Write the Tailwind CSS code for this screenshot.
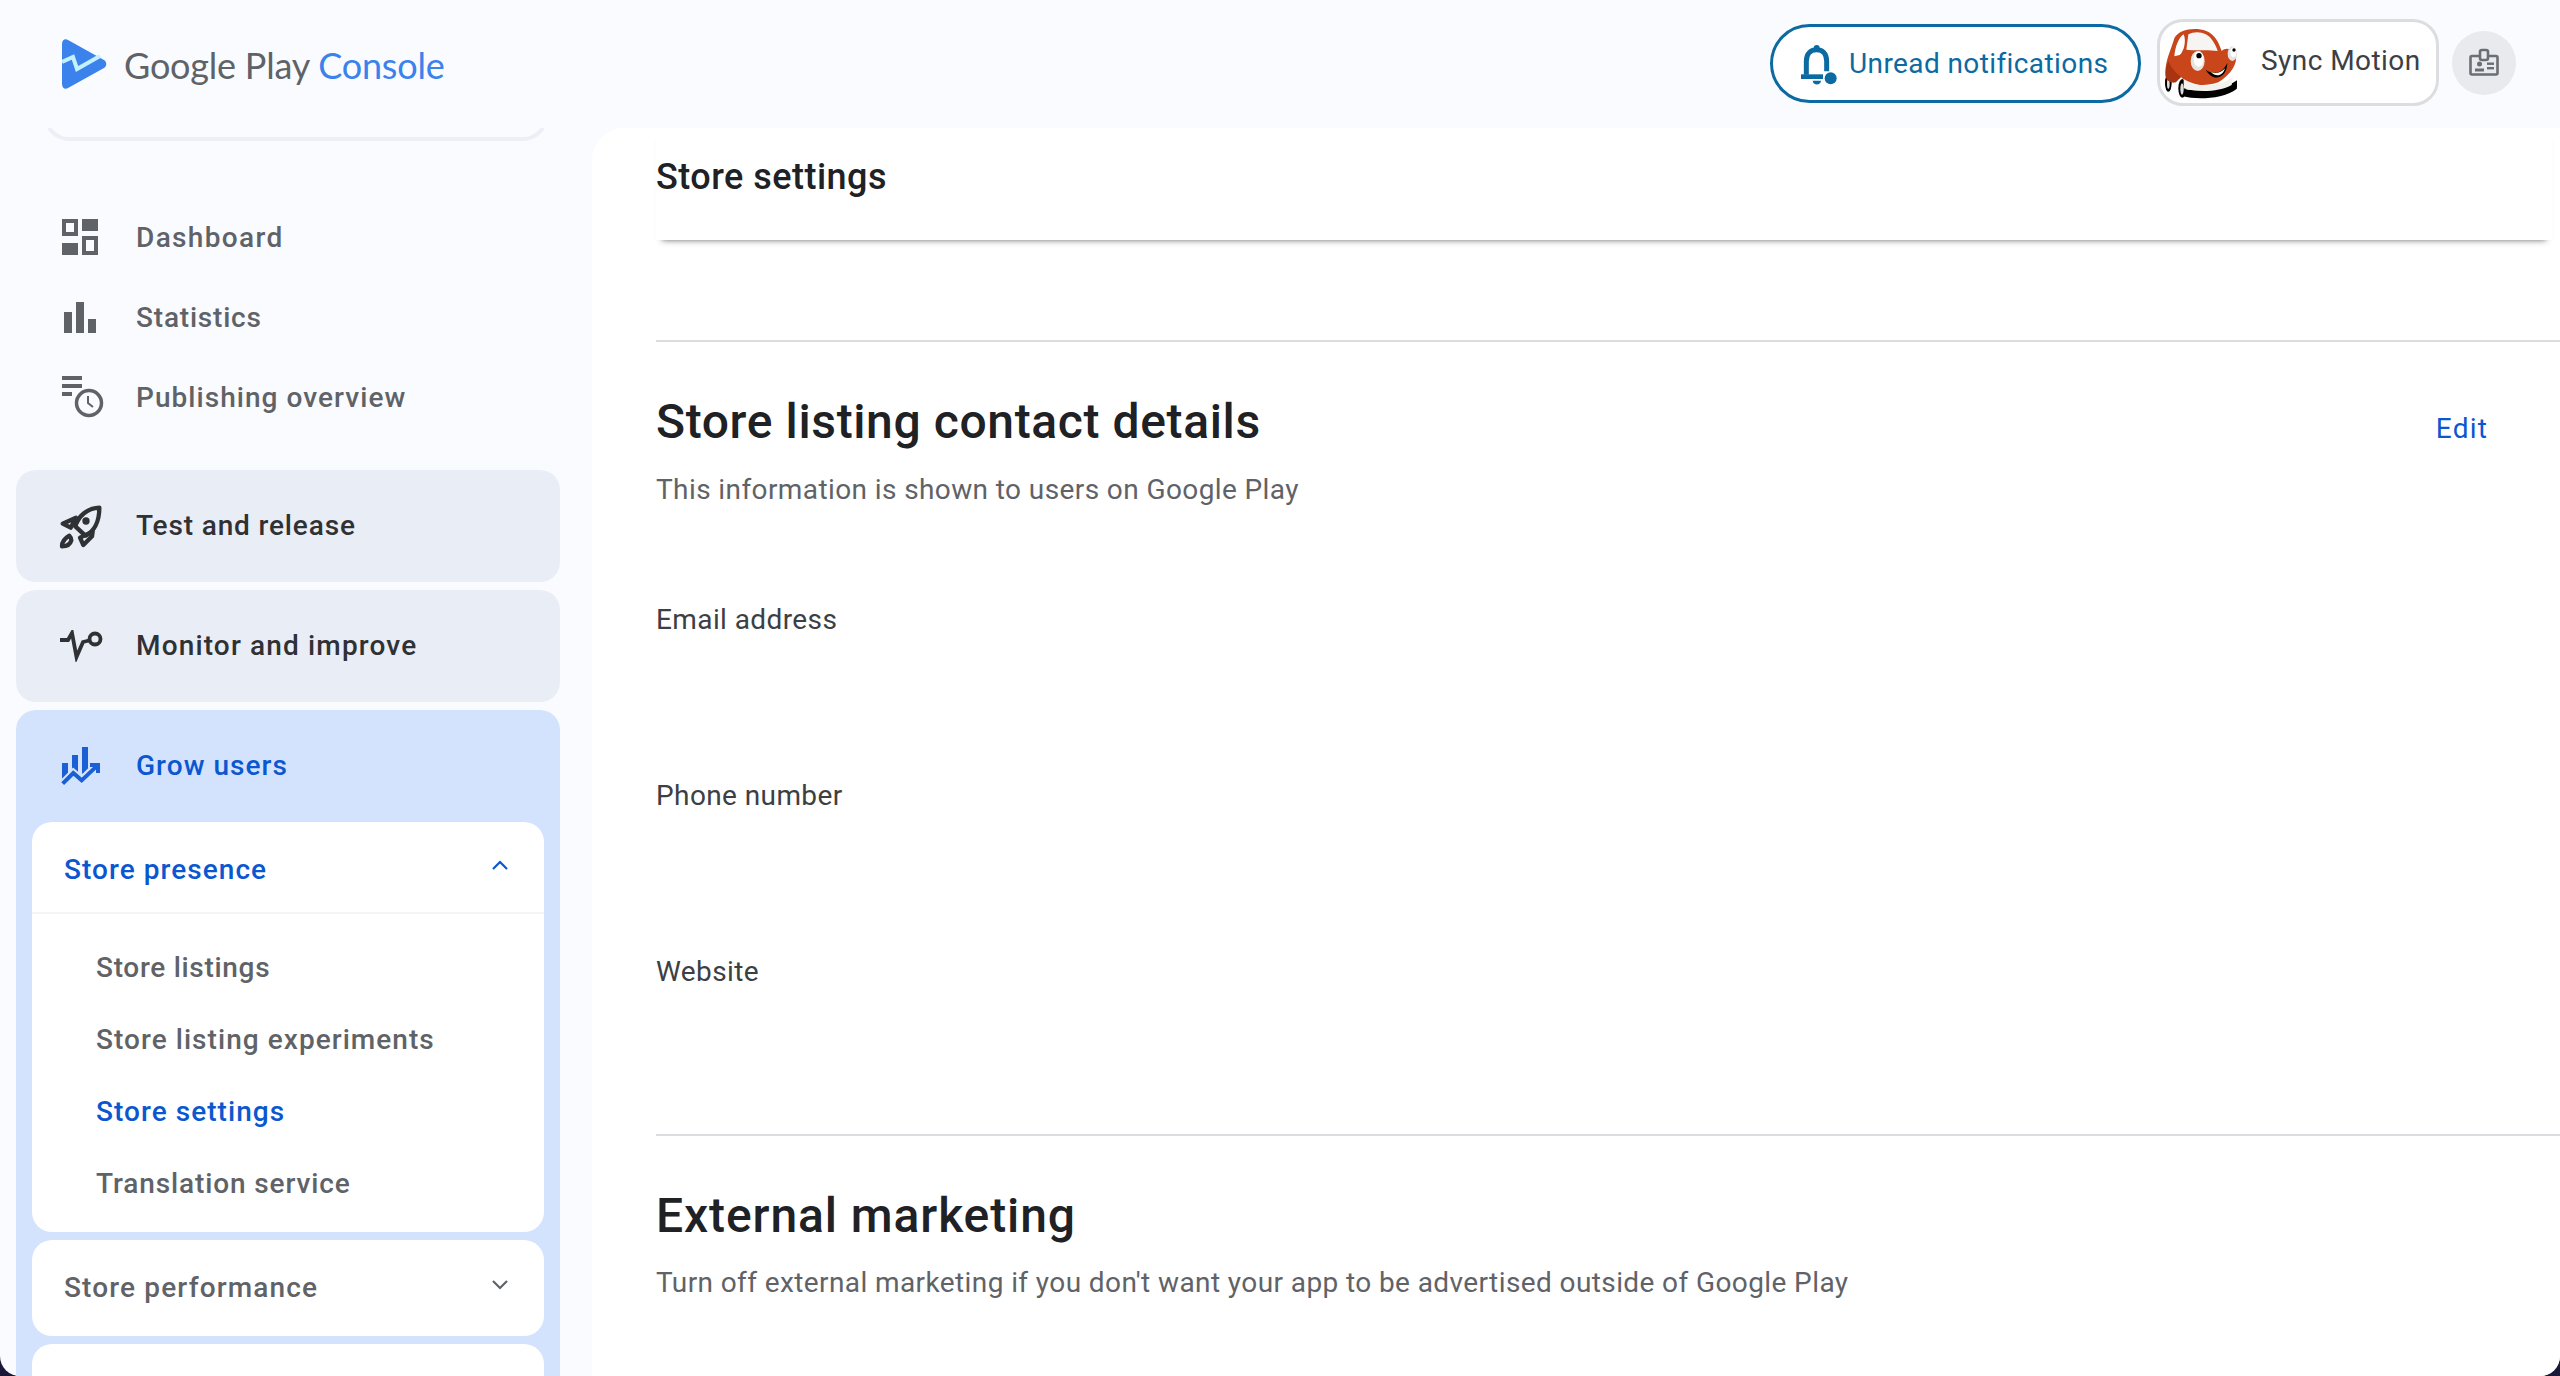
<!doctype html>
<html>
<head>
<meta charset="utf-8">
<script src="https://cdn.jsdelivr.net/npm/@tailwindcss/browser@4"></script>
</head>
<body class="bg-[#1a1838] overflow-hidden">
<div class="w-[2560px] h-[1376px] rounded-b-[20px] overflow-hidden bg-[#f9fbff] flex flex-col font-['Roboto',sans-serif]">
  <header class="h-[128px] shrink-0 flex items-start">
    <div class="flex items-center pl-[62px] pt-[38px]">
      <svg width="45" height="50" viewBox="0 0 45 50" class="shrink-0">
        <path d="M0 5C0 1 3 -1 6 1L42 21C45 23 45 27 42 29L6 49C3 51 0 49 0 45Z" fill="#3b82ec"/>
        <path d="M0 23L11 18L15 30L38 17" fill="none" stroke="#c2f2ff" stroke-width="4"/>
      </svg>
      <span class="ml-[17px] mt-[2px] text-[36px] leading-[50px] tracking-[-0.2px] text-[#5f6368] font-['Lato',sans-serif] whitespace-nowrap">Google Play <span class="text-[#3b82ec]">Console</span></span>
    </div>
    <div class="ml-auto flex items-start mr-[44px]">
      <div class="mt-[24px] w-[371px] h-[79px] rounded-[40px] border-[3px] border-[#0b6aa2] bg-white flex items-center pl-[26px]">
        <svg width="40" height="44" viewBox="60 35 120 130" class="shrink-0">
          <path d="M82 132V92C82 66 98 57 113 57C128 57 143 66 143 92V122" fill="none" stroke="#0b6aa2" stroke-width="15"/>
          <circle cx="113" cy="52" r="9" fill="#0b6aa2"/>
          <rect x="66" y="131" width="66" height="14" fill="#0b6aa2"/>
          <path d="M101 150H126C125 165 102 165 101 150Z" fill="#0b6aa2"/>
          <circle cx="155" cy="143" r="18" fill="#0b6aa2"/>
        </svg>
        <span class="ml-[10px] text-[28px] leading-[36px] tracking-[0.4px] text-[#0b6aa2] whitespace-nowrap">Unread notifications</span>
      </div>
      <div class="ml-[16px] mt-[19px] w-[282px] h-[87px] rounded-[26px] border-[3px] border-[#dcdde1] bg-white flex items-center pl-[5px]">
        <svg width="72" height="72" viewBox="18 20 216 216" class="shrink-0 rounded-[12px]">
          <rect x="18" y="20" width="216" height="216" fill="#fff"/>
          <path d="M72 205C120 215 190 210 234 180V205C190 238 110 238 72 228Z" fill="#000"/>
          <ellipse cx="28" cy="188" rx="10" ry="26" fill="#000"/>
          <ellipse cx="70" cy="204" rx="12" ry="28" fill="#000"/>
          <ellipse cx="28" cy="190" rx="4" ry="15" fill="#ddd"/>
          <ellipse cx="69" cy="206" rx="5" ry="17" fill="#ddd"/>
          <path d="M20 168C16 128 32 100 46 54C60 26 108 20 142 32C168 42 180 68 188 92C200 80 220 84 230 104C238 134 206 170 178 186C132 202 86 194 66 170L50 186C34 188 24 182 20 168Z" fill="#c9451a"/>
          <path d="M20 168C18 150 22 135 28 122C40 150 55 160 66 170L50 186C34 188 24 182 20 168Z" fill="#a83412"/>
          <path d="M74 176C118 204 182 200 222 170L218 194C182 214 120 218 74 204Z" fill="#f4f2ee"/>
          <path d="M46 108C48 82 58 52 74 42C82 60 76 92 62 104Z" fill="#fff"/>
          <path d="M82 88L88 42C112 30 146 36 160 60C168 72 174 84 176 92C146 87 112 92 82 88Z" fill="#f6f5f3"/>
          <ellipse cx="116" cy="122" rx="21" ry="30" fill="#e6e4e0"/>
          <ellipse cx="119" cy="116" rx="15" ry="23" fill="#fff"/>
          <circle cx="120" cy="106" r="8" fill="#000"/>
          <ellipse cx="220" cy="100" rx="14" ry="22" fill="#e6e4e0"/>
          <ellipse cx="223" cy="96" rx="9" ry="15" fill="#fff"/>
          <circle cx="225" cy="89" r="5" fill="#000"/>
          <path d="M140 148C165 165 190 160 205 128C204 172 165 190 140 148Z" fill="#000"/>
          <path d="M156 156C172 162 188 156 198 144C192 166 172 172 156 156Z" fill="#fff"/>
        </svg>
        <span class="ml-[24px] text-[28px] leading-[36px] tracking-[0.45px] text-[#3c4043] whitespace-nowrap -mt-[3px]">Sync Motion</span>
      </div>
      <div class="ml-[13px] mt-[31px] w-[64px] h-[64px] rounded-full bg-[#e8eaed] flex items-center justify-center">
        <svg width="30" height="30" viewBox="0 0 30 30">
          <path d="M11 8H3C2 8 1.500 8.500 1.500 9.500V25C1.500 26 2 26.500 3 26.500H27C28 26.500 28.500 26 28.500 25V9.500C28.500 8.500 28 8 27 8H19" fill="none" stroke="#6a6f73" stroke-width="2.600"/>
          <rect x="11" y="2" width="8" height="10" rx="2" fill="none" stroke="#6a6f73" stroke-width="2.600"/>
          <circle cx="10.500" cy="16" r="2.500" fill="#6a6f73"/>
          <rect x="6" y="20.500" width="9" height="3" fill="#6a6f73"/>
          <rect x="18" y="14.500" width="7" height="2.400" fill="#6a6f73"/>
          <rect x="18" y="19" width="7" height="2.400" fill="#6a6f73"/>
        </svg>
      </div>
    </div>
  </header>

  <div class="flex-1 flex min-h-0">
    <aside class="w-[592px] shrink-0 overflow-hidden">
      <div class="mx-[44px] h-[21px] border-b-[4px] border-x-[4px] border-[#eceff6] rounded-b-[28px] -mt-[12px] box-content"></div>
      <nav class="mt-[56px] text-[28px] font-medium tracking-[1.05px]">
        <div class="h-[80px] flex items-center pl-[62px] text-[#5f6368]">
          <svg width="36" height="36" viewBox="0 0 36 36" class="shrink-0 mr-[38px]" fill="#5f6368">
            <path fill-rule="evenodd" d="M0 0H16V17H0ZM4 4V13H12V4Z"/>
            <rect x="20" y="0" width="16" height="12"/>
            <rect x="0" y="24" width="16" height="12"/>
            <path fill-rule="evenodd" d="M20 17H36V36H20ZM24 21V32H32V21Z"/>
          </svg>
          <span class="tracking-[1.35px] pt-[1px]">Dashboard</span>
        </div>
        <div class="h-[80px] flex items-center pl-[62px] text-[#5f6368]">
          <svg width="36" height="36" viewBox="0 0 36 36" class="shrink-0 mr-[38px]" fill="#5f6368">
            <rect x="2" y="13" width="8" height="21"/>
            <rect x="14" y="3" width="8" height="31"/>
            <rect x="26" y="20" width="8" height="14"/>
          </svg>
          <span class="tracking-[0.8px] pt-[1px]">Statistics</span>
        </div>
        <div class="h-[80px] flex items-center pl-[62px] text-[#5f6368]">
          <svg width="42" height="42" viewBox="0 0 42 42" class="shrink-0 mr-[32px]" fill="#5f6368">
            <rect x="0" y="0" width="20" height="4"/>
            <rect x="0" y="8" width="20" height="4"/>
            <rect x="0" y="16" width="10" height="4"/>
            <circle cx="27" cy="27" r="12.500" fill="none" stroke="#5f6368" stroke-width="3.500"/>
            <path d="M26 20V27L31 31" fill="none" stroke="#5f6368" stroke-width="2"/>
          </svg>
          <span class="pt-[1px]">Publishing overview</span>
        </div>
      </nav>
      <div class="mt-[33px] pl-[16px] pr-[32px] flex flex-col gap-[8px] text-[28px] font-medium tracking-[1.05px]">
        <div class="h-[112px] rounded-[20px] bg-[#e9edf6] flex items-center pl-[34px] text-[#303134]">
          <svg width="70" height="70" viewBox="0 0 210 210" class="shrink-0 mr-[16px]" fill="none" stroke="#303134" stroke-width="13" stroke-linejoin="round">
            <path d="M148 50C110 52 85 76 76 106L106 134C132 122 148 92 148 50Z"/>
            <path d="M78 80L38 98L62 110Z"/>
            <path d="M128 122L126 136L100 162L90 140Z"/>
            <path d="M58 134C44 142 36 152 36 166C48 166 60 162 64 148C64 142 62 138 58 134Z"/>
            <circle cx="108" cy="90" r="11" fill="#303134" stroke="none"/>
          </svg>
          <span class="tracking-[0.85px]">Test and release</span>
        </div>
        <div class="h-[112px] rounded-[20px] bg-[#e9edf6] flex items-center pl-[44px] text-[#303134]">
          <svg width="44" height="32" viewBox="0 0 44 32" class="shrink-0 mr-[32px]" fill="none" stroke="#303134" stroke-width="3.800">
            <path d="M0 10H8L12 3L16.500 27L23 12L31 10"/>
            <circle cx="35" cy="9" r="5.500"/>
          </svg>
          <span class="tracking-[1.15px]">Monitor and improve</span>
        </div>
        <div class="rounded-t-[20px] bg-[#d3e3fd] h-[700px] px-[16px]">
          <div class="h-[112px] flex items-center pl-[18px] text-[#0b57d0]">
            <svg width="70" height="70" viewBox="0 0 210 210" class="shrink-0 mr-[16px]">
              <rect x="36" y="96" width="18" height="60" fill="#1a5fd6"/>
              <rect x="66" y="72" width="18" height="70" fill="#1a5fd6"/>
              <rect x="96" y="48" width="18" height="80" fill="#1a5fd6"/>
              <path d="M38 158L70 126L95 148L135 108" fill="none" stroke="#d3e3fd" stroke-width="24"/>
              <path d="M38 158L70 126L95 148L146 100" fill="none" stroke="#1a5fd6" stroke-width="12"/>
              <path d="M120 96H150V126H138V108H120Z" fill="#1a5fd6"/>
            </svg>
            <span>Grow users</span>
          </div>
          <div class="rounded-[20px] bg-white h-[410px]">
            <div class="h-[92px] pt-[6px] border-b-[2px] border-[#f3f4f6] flex items-center pl-[32px] pr-[36px] text-[#0b57d0] justify-between">
              <span>Store presence</span>
              <svg width="16" height="10" viewBox="0 0 16 10" class="-mt-[10px]" fill="none" stroke="#0b57d0" stroke-width="2.200"><path d="M1 9L8 2L15 9"/></svg>
            </div>
            <div class="pt-[18px] pl-[64px] text-[#5f6368]">
              <div class="h-[72px] flex items-center tracking-[0.7px]">Store listings</div>
              <div class="h-[72px] flex items-center">Store listing experiments</div>
              <div class="h-[72px] flex items-center text-[#0b57d0]">Store settings</div>
              <div class="h-[72px] flex items-center tracking-[0.88px]">Translation service</div>
            </div>
          </div>
          <div class="mt-[8px] rounded-[20px] bg-white h-[96px] flex items-center pl-[32px] pr-[36px] justify-between text-[#5f6368]">
            <span class="tracking-[1.15px]">Store performance</span>
            <svg width="16" height="10" viewBox="0 0 16 10" class="-mt-[6px]" fill="none" stroke="#5f6368" stroke-width="2.200"><path d="M1 1L8 8L15 1"/></svg>
          </div>
          <div class="mt-[8px] rounded-[20px] bg-white h-[96px]"></div>
        </div>
      </div>
    </aside>

    <main class="flex-1 bg-white rounded-tl-[32px] pl-[64px] overflow-hidden">
      <div class="h-[112px] mr-[8px] flex items-center pb-[14px] text-[36px] font-medium tracking-[0.47px] text-[#202124] shadow-[0_6px_6px_-6px_rgba(60,64,67,0.8)]">Store settings</div>
      <div class="mt-[100px] h-[2px] bg-[#dadce0]"></div>
      <section class="mt-[48px] relative pr-[72px]">
        <div class="flex items-start justify-between">
          <h1 class="h-[64px] leading-[64px] text-[48px] font-medium tracking-[0.62px] text-[#202124]">Store listing contact details</h1>
          <a class="mt-[19px] leading-[40px] text-[28px] tracking-[1.2px] text-[#0b57d0]">Edit</a>
        </div>
        <p class="mt-[16px] h-[40px] leading-[40px] text-[28px] tracking-[0.4px] text-[#5f6368]">This information is shown to users on Google Play</p>
        <div class="mt-[90px] h-[176px] text-[28px] leading-[40px] tracking-[0.4px] text-[#3c4043]">Email address</div>
        <div class="h-[176px] text-[28px] leading-[40px] tracking-[0.4px] text-[#3c4043]">Phone number</div>
        <div class="h-[182px] text-[28px] leading-[40px] tracking-[0.4px] text-[#3c4043]">Website</div>
      </section>
      <div class="h-[2px] bg-[#dadce0]"></div>
      <section class="mt-[48px]">
        <h2 class="h-[64px] leading-[64px] text-[48px] font-medium tracking-[0.9px] text-[#202124]">External marketing</h2>
        <p class="mt-[15px] h-[40px] leading-[40px] text-[28px] tracking-[0.4px] text-[#5f6368]">Turn off external marketing if you don't want your app to be advertised outside of Google Play</p>
      </section>
    </main>
  </div>
</div>
</body>
</html>
